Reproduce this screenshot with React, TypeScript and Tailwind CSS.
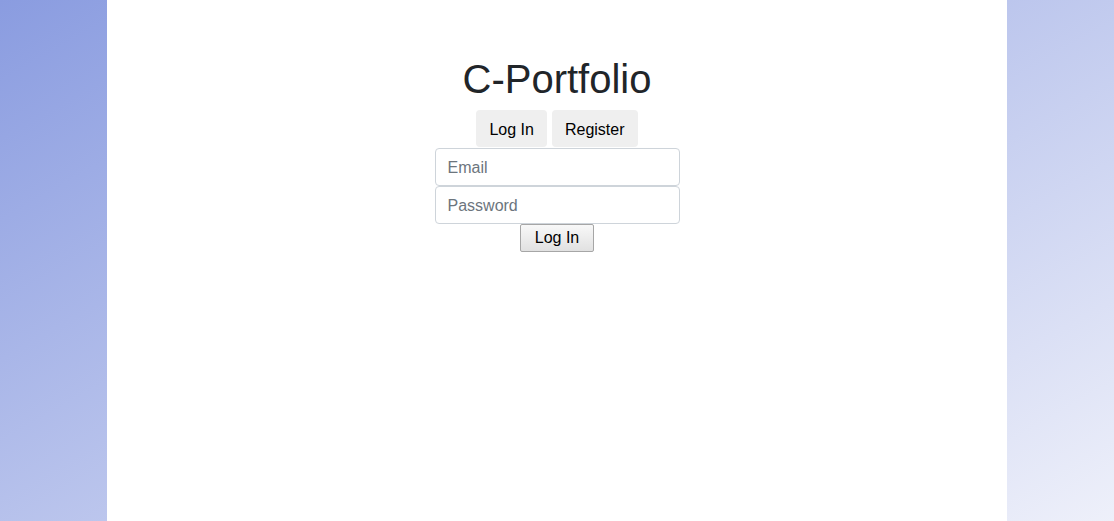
export default function App() {
  return (
    <div className="min-h-screen w-full bg-[linear-gradient(150deg,#8a9ce0,#eef0fa)] font-['Liberation_Sans',Arial,sans-serif]">
      <div className="mx-auto flex min-h-[521px] w-[900px] flex-col items-center bg-white pt-[55px]">
        <h1 className="text-[40px] font-medium leading-[48px] text-[#212529]">C-Portfolio</h1>

        {/* tabs */}
        <div className="mt-[7px] flex gap-[5px]">
          <button className="h-[37px] rounded-[4px] bg-[#efefef] px-[13px] pt-[2px] text-base text-black">Log In</button>
          <button className="h-[37px] rounded-[4px] bg-[#efefef] px-[13px] pt-[2px] text-base text-black">Register</button>
        </div>

        <form className="mt-px flex flex-col items-center" onSubmit={(e) => e.preventDefault()}>
          <input
            type="email"
            placeholder="Email"
            className="h-[38px] w-[245px] rounded-[4px] border border-[#ced4da] px-3 pt-[2px] text-base text-[#495057] placeholder:text-[#6c757d] focus:outline-none"
          />
          <input
            type="password"
            placeholder="Password"
            className="h-[38px] w-[245px] rounded-[4px] border border-[#ced4da] px-3 pt-[2px] text-base text-[#495057] placeholder:text-[#6c757d] focus:outline-none"
          />
          <button
            type="submit"
            className="h-[28px] w-[74px] rounded-[2px] border border-[#a6a6a6] bg-[linear-gradient(#f8f8f8,#e1e1e1)] text-base leading-none text-black"
          >
            Log In
          </button>
        </form>
      </div>
    </div>
  )
}
